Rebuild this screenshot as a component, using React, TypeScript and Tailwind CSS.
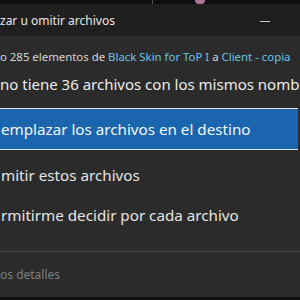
const font = { fontFamily: '"Segoe UI", "Noto Sans", "Open Sans", sans-serif' };

const Option = ({ text, active }: { text: string; active?: boolean }) => (
  <div
    className={
      "flex items-center whitespace-nowrap text-[15.2px] mr-[2px] " +
      (active
        ? "h-[42px] bg-[#1a65ad] border-y border-[#dfe8f0] text-[#f2f6fa]"
        : "h-[40px] text-[#e4e4e4]")
    }
  >
    <span className="pl-px">{text}</span>
  </div>
);

export default function App() {
  return (
    <div className="w-[300px] h-[300px] bg-[#0d0d0d] overflow-hidden" style={font}>
      {/* background behind the dialog */}
      <div className="h-[4px] flex">
        <div className="w-[152px]" />
        <div className="w-px bg-[#555]" />
        <div className="w-[42px]" />
        <div className="w-[10px] h-[4px] rounded-b-full bg-[#b07898]" />
      </div>

      <div className="h-[293px] flex flex-col">
        <div className="h-[32px] bg-[#1f1f1f] flex items-center justify-between pt-[2px]">
          <span className="text-[12px] text-[#e8e8e8] whitespace-nowrap">zar u omitir archivos</span>
          <div className="w-[10px] h-px bg-[#c8c8c8] mr-[30px]" />
        </div>

        <div className="flex-1 bg-[#2b2b2b] flex flex-col">
          <div className="h-[36px] flex items-center pt-[6px] whitespace-nowrap text-[11.4px] text-[#d6d6d6]">
            <span>
              o 285 elementos de <span className="text-[#6cc3e6]">Black Skin for ToP I</span> a{" "}
              <span className="text-[#6cc3e6]">Client - copia</span>
            </span>
          </div>
          <div className="h-[24px] flex items-center whitespace-nowrap text-[15px] text-[#ececec]">
            <span>no tiene 36 archivos con los mismos nomb</span>
          </div>
          <div className="h-[12px]" />
          <Option text="emplazar los archivos en el destino" active />
          <div className="h-[5px]" />
          <Option text="mitir estos archivos" />
          <Option text="rmitirme decidir por cada archivo" />
          <div className="h-[16px]" />
          <div className="h-px bg-[#4c4c4c]" />
          <div className="flex-1 flex items-center whitespace-nowrap text-[12px] text-[#7e7e7e]">
            <span>os detalles</span>
          </div>
        </div>
      </div>
    </div>
  );
}
